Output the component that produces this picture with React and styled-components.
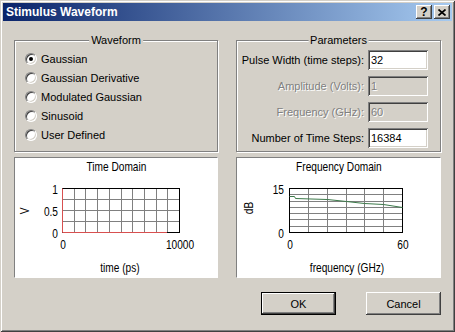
import React from 'react';
import styled, { createGlobalStyle } from 'styled-components';

const GlobalStyle = createGlobalStyle`
  html, body {
    margin: 0;
    padding: 0;
    background: #d4d0c8;
  }
  body {
    font-family: "Liberation Sans", Arial, sans-serif;
    font-size: 11px;
    color: #000;
  }
  * {
    box-sizing: border-box;
  }
`;

const Window = styled.div`
  width: 455px;
  height: 332px;
  padding: 3px;
  display: flex;
  flex-direction: column;
  background: #d4d0c8;
  box-shadow: inset 1px 1px #d4d0c8, inset -1px -1px #404040,
    inset 2px 2px #fff, inset -2px -2px #808080;
`;

const TitleBar = styled.div`
  height: 18px;
  display: flex;
  align-items: center;
  justify-content: space-between;
  padding: 0 2px 0 3px;
  background: linear-gradient(to right, #0a246a, #a6caf0);
`;

const TitleText = styled.span`
  color: #fff;
  font-weight: bold;
  font-size: 12px;
`;

const CaptionButtons = styled.div`
  display: flex;
  gap: 2px;
`;

const CaptionButton = styled.div`
  width: 16px;
  height: 14px;
  display: flex;
  align-items: center;
  justify-content: center;
  background: #d4d0c8;
  font-weight: bold;
  font-size: 12px;
  line-height: 14px;
  box-shadow: inset -1px -1px #404040, inset 1px 1px #fff,
    inset -2px -2px #808080;
`;

const Body = styled.div`
  flex: 1;
  display: flex;
  flex-direction: column;
  padding: 19px 11px 0 11px;
`;

const Columns = styled.div`
  display: grid;
  grid-template-columns: 204px 205px;
  column-gap: 18px;
  margin-top: ${p => p.$gap || 0}px;
`;

const GroupBox = styled.div`
  position: relative;
  height: 112px;
  border: 1px solid #808080;
  box-shadow: inset 1px 1px #fff, 1px 1px #fff;
`;

const Legend = styled.span`
  position: absolute;
  top: -8px;
  left: 50%;
  transform: translateX(-50%);
  padding: 0 2px;
  line-height: 14px;
  background: #d4d0c8;
  white-space: nowrap;
`;

const RadioList = styled.div`
  display: flex;
  flex-direction: column;
  padding: 8px 0 0 10px;
`;

const RadioRow = styled.label`
  height: 19px;
  display: flex;
  align-items: center;
  gap: 4px;
`;

const RadioDot = styled.span`
  position: relative;
  width: 12px;
  height: 12px;
  border-radius: 50%;
  background: #fff;
  border: 1px solid;
  border-color: #808080 #fff #fff #808080;
  box-shadow: inset 1px 1px #404040, inset -1px -1px #d4d0c8;

  &::after {
    content: '';
    display: ${p => (p.$checked ? 'block' : 'none')};
    position: absolute;
    left: 3px;
    top: 3px;
    width: 4px;
    height: 4px;
    border-radius: 50%;
    background: #000;
  }
`;

const ParamGrid = styled.div`
  display: grid;
  grid-template-columns: 1fr 60px;
  grid-auto-rows: 20px;
  column-gap: 4px;
  row-gap: 6px;
  align-items: center;
  padding: 9px 12px 0 0;
`;

const ParamLabel = styled.span`
  text-align: right;
  white-space: nowrap;
  color: ${p => (p.$disabled ? '#808080' : '#000')};
  text-shadow: ${p => (p.$disabled ? '1px 1px #fff' : 'none')};
`;

const Field = styled.input`
  width: 60px;
  height: 20px;
  border: none;
  outline: none;
  padding: 0 3px;
  font-family: inherit;
  font-size: 11px;
  color: #000;
  background: #fff;
  box-shadow: inset 1px 1px #808080, inset -1px -1px #fff,
    inset 2px 2px #404040, inset -2px -2px #d4d0c8;

  &:disabled {
    color: #808080;
    background: #d4d0c8;
    text-shadow: 1px 1px #fff;
  }
`;

const PlotPanel = styled.div`
  height: 121px;
  display: flex;
  flex-direction: column;
  background: #fff;
  border: 1px solid;
  border-color: #808080 #fff #fff #808080;
`;

const PlotTitle = styled.div`
  height: 18px;
  line-height: 18px;
  text-align: center;
  font-size: 13px;

  span {
    display: inline-block;
    transform: scaleX(0.78);
  }
`;

const Chart = styled.svg`
  display: block;
`;

const ChartText = styled.text`
  font-family: "Liberation Sans", sans-serif;
  font-size: 13px;
  fill: #000;
`;

const ButtonRow = styled.div`
  display: flex;
  justify-content: flex-end;
  gap: 30px;
  margin-top: 14px;
`;

const PushButton = styled.button`
  width: 75px;
  height: 23px;
  padding: 0;
  font-family: inherit;
  font-size: 11px;
  color: #000;
  background: #d4d0c8;
  border: ${p => (p.$default ? '1px solid #000' : 'none')};
  box-shadow: inset -1px -1px #404040, inset 1px 1px #fff,
    inset -2px -2px #808080;
`;

// chart labels use a condensed face, squeezed horizontally
function Label({ x, y, anchor = 'middle', rotate, children }) {
  const t = `translate(${x} ${y})${rotate ? ` rotate(${rotate})` : ''} scale(0.78 1)`;
  return (
    <ChartText transform={t} textAnchor={anchor} dominantBaseline="central">
      {children}
    </ChartText>
  );
}

function Grid({ x, y, w, h, cols, rows }) {
  const lines = [];
  for (let i = 1; i < cols; i++) {
    const gx = Math.round(x + (i * w) / cols) + 0.5;
    lines.push(<line key={'c' + i} x1={gx} y1={y} x2={gx} y2={y + h} />);
  }
  for (let j = 1; j < rows; j++) {
    const gy = Math.round(y + (j * h) / rows) + 0.5;
    lines.push(<line key={'r' + j} x1={x} y1={gy} x2={x + w} y2={gy} />);
  }
  return (
    <g>
      <g stroke="#808080" strokeWidth="1">{lines}</g>
      <rect x={x + 0.5} y={y + 0.5} width={w} height={h} fill="none" stroke="#000" />
    </g>
  );
}

function TimeChart() {
  const x = 47, y = 12, w = 117, h = 44;
  return (
    <Chart width="202" height="101">
      <Grid x={x} y={y} w={w} h={h} cols={10} rows={4} />
      <polyline
        points={`${x + 0.5},${y + 0.5} ${x + 0.5},${y + h + 0.5} ${x + 105},${y + h + 0.5}`}
        fill="none"
        stroke="#d85050"
      />
      <Label x={43} y={y + 1} anchor="end">1</Label>
      <Label x={43} y={y + h / 2 + 1} anchor="end">0.5</Label>
      <Label x={43} y={y + h + 1} anchor="end">0</Label>
      <Label x={9} y={35} rotate={-90}>V</Label>
      <Label x={x + 1} y={68}>0</Label>
      <Label x={x + w + 1} y={68}>10000</Label>
      <Label x={105} y={91}>time (ps)</Label>
    </Chart>
  );
}

function FreqChart() {
  const x = 52, y = 12, w = 113, h = 44;
  const trace = [
    [52, 20], [57, 20], [58, 22], [90, 23], [109, 25], [127, 27], [146, 28], [165, 31],
  ];
  return (
    <Chart width="203" height="101">
      <Grid x={x} y={y} w={w} h={h} cols={6} rows={7} />
      <polyline
        points={trace.map(([px, py]) => `${px + 0.5},${py + 0.5}`).join(' ')}
        fill="none"
        stroke="#3c7a4a"
      />
      <Label x={47} y={y + 1} anchor="end">15</Label>
      <Label x={47} y={y + h + 1} anchor="end">0</Label>
      <Label x={11} y={32} rotate={-90}>dB</Label>
      <Label x={x + 1} y={68}>0</Label>
      <Label x={x + w + 1} y={68}>60</Label>
      <Label x={110} y={91}>frequency (GHz)</Label>
    </Chart>
  );
}

const waveforms = ['Gaussian', 'Gaussian Derivative', 'Modulated Gaussian', 'Sinusoid', 'User Defined'];

const params = [
  { label: 'Pulse Width (time steps):', value: '32' },
  { label: 'Amplitude (Volts):', value: '1', disabled: true },
  { label: 'Frequency (GHz):', value: '60', disabled: true },
  { label: 'Number of Time Steps:', value: '16384' },
];

export default function App() {
  return (
    <>
      <GlobalStyle />
      <Window>
        <TitleBar>
          <TitleText>Stimulus Waveform</TitleText>
          <CaptionButtons>
            <CaptionButton>?</CaptionButton>
            <CaptionButton>
              <svg width="8" height="7" viewBox="0 0 8 7">
                <path d="M0.5 0.5 L7.5 6.5 M7.5 0.5 L0.5 6.5" stroke="#000" strokeWidth="1.7" />
              </svg>
            </CaptionButton>
          </CaptionButtons>
        </TitleBar>
        <Body>
          <Columns>
            <GroupBox>
              <Legend>Waveform</Legend>
              <RadioList>
                {waveforms.map((name, i) => (
                  <RadioRow key={name}>
                    <RadioDot $checked={i === 0} />
                    {name}
                  </RadioRow>
                ))}
              </RadioList>
            </GroupBox>
            <GroupBox>
              <Legend>Parameters</Legend>
              <ParamGrid>
                {params.map(p => (
                  <React.Fragment key={p.label}>
                    <ParamLabel $disabled={p.disabled}>{p.label}</ParamLabel>
                    <Field defaultValue={p.value} disabled={p.disabled} />
                  </React.Fragment>
                ))}
              </ParamGrid>
            </GroupBox>
          </Columns>
          <Columns $gap={5}>
            <PlotPanel>
              <PlotTitle><span>Time Domain</span></PlotTitle>
              <TimeChart />
            </PlotPanel>
            <PlotPanel>
              <PlotTitle><span>Frequency Domain</span></PlotTitle>
              <FreqChart />
            </PlotPanel>
          </Columns>
          <ButtonRow>
            <PushButton $default>OK</PushButton>
            <PushButton>Cancel</PushButton>
          </ButtonRow>
        </Body>
      </Window>
    </>
  );
}
